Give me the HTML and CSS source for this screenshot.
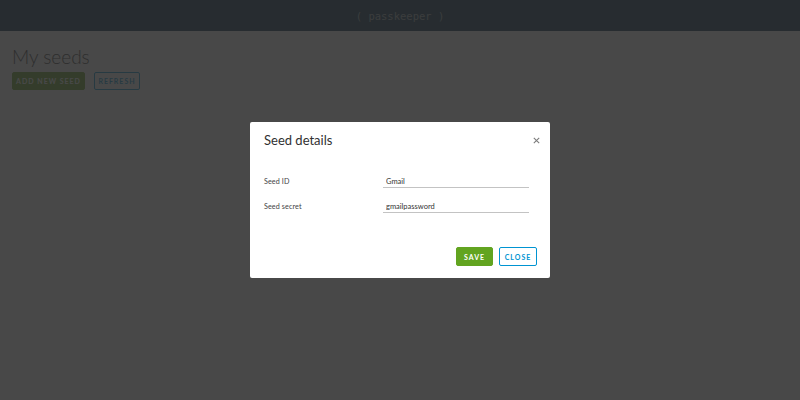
FILE: index.html
```html
<!DOCTYPE html>
<html>
<head>
<meta charset="utf-8">
<link rel="stylesheet" href="styles.css">
</head>
<body>
<header class="topbar"><span class="brand">( passkeeper )</span></header>
<main class="content">
  <h1 class="page-title">My seeds</h1>
  <div class="actions">
    <button class="btn btn-success wide">Add new seed</button>
    <button class="btn btn-outline">Refresh</button>
  </div>
</main>
<div class="backdrop"></div>
<div class="modal-wrap">
  <div class="modal">
    <div class="modal-header">
      <h3 class="modal-title">Seed details</h3>
      <button class="close" aria-label="close">
        <svg width="7" height="7" viewBox="0 0 7 7"><path d="M0.8 0.8L6.2 6.2M6.2 0.8L0.8 6.2" stroke="#7c7c7c" stroke-width="1.1"/></svg>
      </button>
    </div>
    <form class="modal-body">
      <div class="row"><label class="lbl">Seed ID</label><input class="field" value="Gmail"></div>
      <div class="row"><label class="lbl">Seed secret</label><input class="field" value="gmailpassword"></div>
    </form>
    <div class="modal-footer">
      <button class="btn btn-success small save">Save</button>
      <button class="btn btn-outline small cls">Close</button>
    </div>
  </div>
</div>
</body>
</html>
```
FILE: styles.css
```css
* { box-sizing: border-box; }
html, body { margin: 0; padding: 0; }
body {
  width: 800px; height: 400px; overflow: hidden;
  background: #fafafa;
  font-family: Lato, "Open Sans", sans-serif;
  color: #565656;
}
.topbar {
  height: 31px;
  background: #002c49;
  display: flex; align-items: center; justify-content: center;
}
.brand {
  font-family: "DejaVu Sans Mono", monospace;
  font-size: 10.5px;
  color: #9aa3a8;
  padding-top: 1px;
}
.content { padding: 14px 12px; }
.page-title {
  margin: 0 0 3px;
  font-weight: 300;
  font-size: 19px;
  line-height: 24px;
  color: #333;
}
.actions { display: flex; gap: 9px; }
.btn {
  font-family: Lato, sans-serif;
  text-transform: uppercase;
  font-size: 7px;
  font-weight: 700;
  letter-spacing: 1px;
  height: 18px;
  padding: 0;
  border-radius: 2px;
  display: flex; align-items: center; justify-content: center;
  cursor: pointer;
}
.wide { width: 73px; }
.actions .btn-outline { width: 46px; }
.btn-success { background: #62a420; border: 1px solid #62a420; color: #fff; }
.btn-outline { background: #fff; border: 1px solid #0094d2; color: #0094d2; }
.backdrop {
  position: fixed; inset: 0;
  background: rgba(45,45,45,0.87);
}
.modal-wrap {
  position: fixed; inset: 0;
  display: flex; align-items: flex-start; justify-content: center;
  padding-top: 122px;
}
.modal {
  width: 300px; height: 156px;
  background: #fff;
  border-radius: 2px;
  padding: 10px 10px 12px 14px;
  display: flex; flex-direction: column;
}
.modal-header { display: flex; justify-content: space-between; align-items: center; height: 16px; }
.modal-title { margin: 0; font-weight: 400; font-size: 13px; color: #313131; letter-spacing: 0; }
.close { background: none; border: 0; padding: 0; width: 7px; height: 7px; display: flex; }
.modal-body { margin-top: 25px; display: flex; flex-direction: column; gap: 8px; }
.row { display: flex; align-items: center; height: 17px; }
.lbl { width: 119px; font-size: 7.2px; color: #444; letter-spacing: 0.1px; }
.field {
  width: 146px; height: 13px;
  border: 0; border-bottom: 1px solid #c3c3c3;
  padding: 0 3px; font-family: Lato, sans-serif; font-size: 7.5px; color: #333;
  outline: none;
}
.modal-footer { margin-top: auto; display: flex; justify-content: flex-end; gap: 6px; padding-right: 3px; }
.small { height: 19px; }
.save { width: 37px; }
.cls { width: 38px; }
</style>
```
